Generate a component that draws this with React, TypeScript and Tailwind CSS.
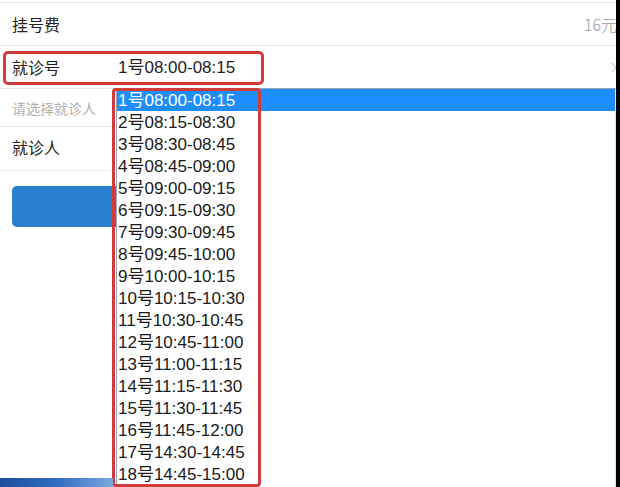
import React from "react";

const slots = [
  "1号08:00-08:15",
  "2号08:15-08:30",
  "3号08:30-08:45",
  "4号08:45-09:00",
  "5号09:00-09:15",
  "6号09:15-09:30",
  "7号09:30-09:45",
  "8号09:45-10:00",
  "9号10:00-10:15",
  "10号10:15-10:30",
  "11号10:30-10:45",
  "12号10:45-11:00",
  "13号11:00-11:15",
  "14号11:15-11:30",
  "15号11:30-11:45",
  "16号11:45-12:00",
  "17号14:30-14:45",
  "18号14:45-15:00",
];

const cjk = { fontFamily: '"Noto Sans CJK SC", "Liberation Sans", sans-serif' };
const listFont = { fontFamily: '"Liberation Sans", "Noto Sans CJK SC", sans-serif' };

export default function App() {
  return (
    <div className="relative w-[620px] h-[487px] overflow-hidden bg-white text-[#222]" style={cjk}>
      <div className="flex flex-col pt-[2px]">
        <div className="border-t border-[#e6e6e6] h-[43px] flex items-center justify-between pl-[12px] pr-[3px] pb-[1px]">
          <span className="text-[16px] leading-none">挂号费</span>
          <span className="text-[16px] leading-none text-[#9a9a9a] font-light">16元</span>
        </div>
        <div className="border-t border-[#e6e6e6] h-[43px] flex items-center pl-[12px] pr-[3px]">
          <span className="text-[16px] leading-none w-[106px]">就诊号</span>
          <span className="text-[17px] leading-none" style={listFont}>1号08:00-08:15</span>
          <svg className="ml-auto" width="6" height="11" viewBox="0 0 6 11">
            <path d="M0.8 0.8l4.4 4.7-4.4 4.7" fill="none" stroke="#cfcfcf" strokeWidth="1.3" />
          </svg>
        </div>
        <div className="border-t border-[#e6e6e6] h-[38px] flex items-center pl-[12px]">
          <span className="text-[14px] leading-none text-[#b0b0b0]">请选择就诊人</span>
        </div>
        <div className="border-t border-[#e6e6e6] h-[44px] flex items-center pl-[12px] pb-[4px]">
          <span className="text-[16px] leading-none">就诊人</span>
        </div>
        <div className="border-t border-[#ececec] px-[12px] pt-[15px]">
          <div className="h-[41px] rounded-[5px] bg-[#2b7fd2]" />
        </div>
      </div>

      {/* dropdown list */}
      <div className="absolute left-[116px] top-[88px] w-[500px] h-[399px] bg-white border-l border-t border-[#9aa6b4] border-r border-r-[#e2e2e2]" style={listFont}>
        {slots.map((s, i) => (
          <div
            key={s}
            className={
              "h-[22px] flex items-center pl-[1px] text-[17px] leading-none " +
              (i === 0 ? "bg-[#1e8eff] text-white" : "text-[#1a1a1a]")
            }
          >
            {s}
          </div>
        ))}
      </div>

      {/* annotations */}
      <div className="absolute left-[3px] top-[51px] w-[261px] h-[34px] border-[3px] border-[#d13b3b] rounded-[5px]" />
      <div className="absolute left-[112px] top-[88px] w-[149px] h-[399px] border-[3px] border-[#d13b3b] rounded-[4px]" />

      {/* taskbar sliver */}
      <div className="absolute left-0 bottom-0 w-[113px] h-[9px] bg-gradient-to-r from-[#1d4f9c] via-[#2f6cc0] to-[#7aa8de]" />

      {/* right window edge */}
      <div className="absolute right-0 top-0 w-[4px] h-full bg-black" />
    </div>
  );
}
